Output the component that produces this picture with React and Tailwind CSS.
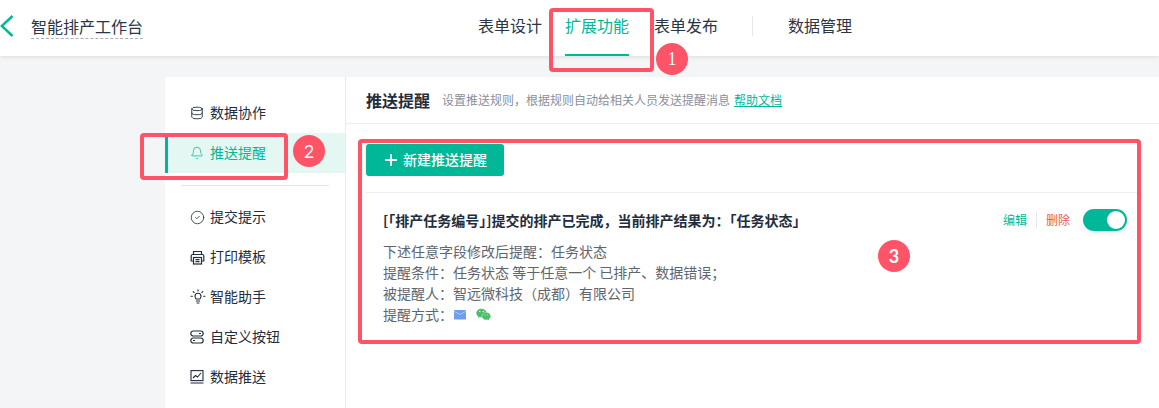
import React from "react";
import { FaWeixin } from "react-icons/fa";
import { Database, Bell, CircleCheck } from "lucide-react";

const Bulb = () => (
  <svg width="16" height="16" viewBox="0 0 16 16" fill="none" stroke="currentColor" strokeWidth="1.100" strokeLinecap="round">
    <path d="M5 7.200a3 3 0 1 1 6 0c0 1.100-.7 1.700-1.100 2.800H6.100C5.700 8.900 5 8.300 5 7.200Z" />
    <path d="M6.300 12h3.400M7 14h2M8 .8v1.200M3.200 2.600l.9.900M12.800 2.600l-.9.900M1 7.200h1.400M13.600 7.200H15" />
  </svg>
);
const Print = () => (
  <svg width="15" height="15" viewBox="0 0 15 15" fill="none" stroke="currentColor" strokeWidth="1.200">
    <path d="M3.500 4.500V1.500h8v3" />
    <path d="M3 11H1.200V6a1.500 1.500 0 0 1 1.500-1.500h9.600A1.500 1.500 0 0 1 13.800 6v5H12" />
    <rect x="3.500" y="7.500" width="8" height="6.500" />
    <path d="M5.500 9.700h4M5.500 11.700h4" />
  </svg>
);
const Btns = () => (
  <svg width="14" height="14" viewBox="0 0 14 14" fill="none" stroke="currentColor" strokeWidth="1.200">
    <rect x="0.800" y="1" width="12.400" height="5" rx="2.500" />
    <rect x="0.800" y="8" width="12.400" height="5" rx="2.500" />
    <path d="M9 3.500h2M3 10.500h2" />
  </svg>
);
const ChartBox = () => (
  <svg width="14" height="14" viewBox="0 0 14 14" fill="none" stroke="currentColor" strokeWidth="1.100">
    <rect x="1" y="0.600" width="12" height="10" />
    <path d="M0.500 13h13M3 8l2.500-2.500 2 1.500L11 3" />
  </svg>
);
const Mail = () => (
  <svg width="12" height="10" viewBox="0 0 12 10" className="block">
    <rect width="12" height="9.500" rx="0.800" fill="#6f9df1" />
    <path d="M0.500 1.500 6 4.500l5.500-3" fill="none" stroke="#cfe0fb" strokeWidth="0.700" />
  </svg>
);

const items1 = [{ l: "数据协作", I: <Database size={14} strokeWidth={1.500} /> }];
const items2 = [
  { l: "提交提示", I: <CircleCheck size={15} strokeWidth={1.300} /> },
  { l: "打印模板", I: <Print /> },
  { l: "智能助手", I: <Bulb /> },
  { l: "自定义按钮", I: <Btns /> },
  { l: "数据推送", I: <ChartBox /> },
];

function Row({ l, I }) {
  return (
    <div className="h-10 flex items-center pl-[24px] text-[14px] text-[#1f2d3d]">
      <span className="w-[21px] flex justify-start pl-[1px]">{I}</span>
      <span className="mt-[-2px]">{l}</span>
    </div>
  );
}

function Mark({ className, children }) {
  return (
    <div className={"absolute w-8 h-8 rounded-full bg-[#ff5468] text-white flex items-center justify-center text-[18px] " + className}>
      {children}
    </div>
  );
}

export default function App() {
  return (
    <div className="relative w-[1159px] h-[408px] overflow-hidden bg-[#f4f5f7] font-['Noto_Sans_CJK_SC','Noto_Sans',sans-serif]">
      <header className="h-[56px] bg-white shadow-[0_1px_4px_rgba(0,0,0,0.1)] relative">
        <div className="absolute left-0 top-[15px] text-[#00b898]">
          <svg width="14" height="22" viewBox="0 0 14 22" fill="none" stroke="currentColor" strokeWidth="2.400"><path d="M12.500 1 1.800 11 12.500 21" /></svg>
        </div>
        <div className="absolute left-[31px] top-[16px] text-[16px] leading-[20px] text-[#2c3545] border-b border-dashed border-[#a9adb5] h-[23px] w-[112px] whitespace-nowrap">智能排产工作台</div>
        <nav className="absolute left-[478px] top-0 h-[56px] flex text-[16px] text-[#2c3545]">
          <div className="h-full flex items-center pb-[7px] w-[64px]">表单设计</div>
          <div className="h-full flex items-center pb-[5px] w-[64px] ml-[23px] text-[#00b898] border-b-2 border-[#00b898] box-border">扩展功能</div>
          <div className="h-full flex items-center pb-[7px] w-[64px] ml-[25px]">表单发布</div>
          <div className="w-px h-5 bg-[#e5e7eb] mt-[16px] ml-[34px]"></div>
          <div className="h-full flex items-center pb-[7px] w-[64px] ml-[35px]">数据管理</div>
        </nav>
      </header>

      <main className="absolute left-[165px] top-[77px] right-0 bottom-0 bg-white flex">
        <aside className="w-[181px] border-r border-[#e8eaec] pt-4 shrink-0">
          {items1.map((x) => <Row key={x.l} {...x} />)}
          <div className="h-10 flex items-center pl-[21px] text-[14px] text-[#00b898] bg-[#e5f7f3] border-l-[3px] border-[#00b898]">
            <span className="w-[21px] pl-[1px]"><Bell size={14} strokeWidth={1.300} /></span>
            <span className="mt-[-2px]">推送提醒</span>
          </div>
          <div className="mx-4 mt-3 mb-[11px] h-px bg-[#e3e5e8]"></div>
          {items2.map((x) => <Row key={x.l} {...x} />)}
        </aside>

        <section className="flex-1 min-w-0">
          <div className="h-[47px] border-b border-[#ebedf0] flex items-center pl-[20px]">
            <span className="text-[16px] font-bold text-[#1f2d3d]">推送提醒</span>
            <span className="ml-[12px] text-[12px] text-[#8a8f99]">设置推送规则，根据规则自动给相关人员发送提醒消息</span>
            <span className="ml-[4px] text-[12px] text-[#00b898] underline">帮助文档</span>
          </div>
          <div className="pl-[20px] pr-[18px] pt-[20px]">
            <button className="w-[138px] h-[32px] rounded-[3px] bg-[#00b898] text-white text-[14px] font-medium flex items-center pl-[18px]">
              <svg width="14" height="14" viewBox="0 0 14 14" className="mr-[5px] mt-[-1px]" stroke="currentColor" strokeWidth="1.800"><path d="M7 1v12M1 7h12" /></svg>
              <span className="mt-[-2px]">新建推送提醒</span>
            </button>
            <div className="mt-[16px] border-t border-[#ebedf0] pt-[17px] pl-[17px] pr-[14px] relative">
              <div className="flex justify-between">
                <div className="text-[14px] font-bold text-[#1f2d3d] leading-[24px] mt-[-2px]">[「排产任务编号」]提交的排产已完成，当前排产结果为：「任务状态」</div>
                <div className="flex items-center text-[12px] h-[22px] -mt-[1px]">
                  <span className="text-[#00b898] ml-[1px]">编辑</span>
                  <span className="w-px h-4 bg-[#e5e7eb] mx-[9px]"></span>
                  <span className="text-[#ea5a54]">删除</span>
                  <span className="ml-[13px] w-[44px] h-[22px] rounded-full bg-[#00b898] flex items-center justify-end pr-[2px] shadow-[0_2px_6px_rgba(0,0,0,0.08)]">
                    <span className="w-[18px] h-[18px] rounded-full bg-white block"></span>
                  </span>
                </div>
              </div>
              <div className="mt-[9px] text-[14px] leading-[21px] text-[#5e6570]">
                <div>下述任意字段修改后提醒：任务状态</div>
                <div>提醒条件：任务状态 等于任意一个 已排产、数据错误；</div>
                <div>被提醒人：智远微科技（成都）有限公司</div>
                <div className="flex items-center">
                  提醒方式：
                  <span className="ml-[1px]"><Mail /></span>
                  <FaWeixin size={15} className="ml-[10px] text-[#4cbf6a]" />
                </div>
              </div>
            </div>
          </div>
        </section>
      </main>

      <div className="absolute left-[549px] top-[8px] w-[105px] h-[64px] border-4 border-[#ff5468] rounded-[4px]"></div>
      <div className="absolute left-[140px] top-[133px] w-[148px] h-[47px] border-4 border-[#ff5468] rounded-[4px]"></div>
      <div className="absolute left-[358px] top-[139px] w-[783px] h-[205px] border-4 border-[#ff5468] rounded-[4px]"></div>
      <Mark className="left-[656px] top-[43px] font-['Liberation_Serif',serif]">1</Mark>
      <Mark className="left-[293px] top-[135px] font-['Lato',sans-serif]">2</Mark>
      <Mark className="left-[878px] top-[240px] font-['Lato',sans-serif] font-bold">3</Mark>
    </div>
  );
}
